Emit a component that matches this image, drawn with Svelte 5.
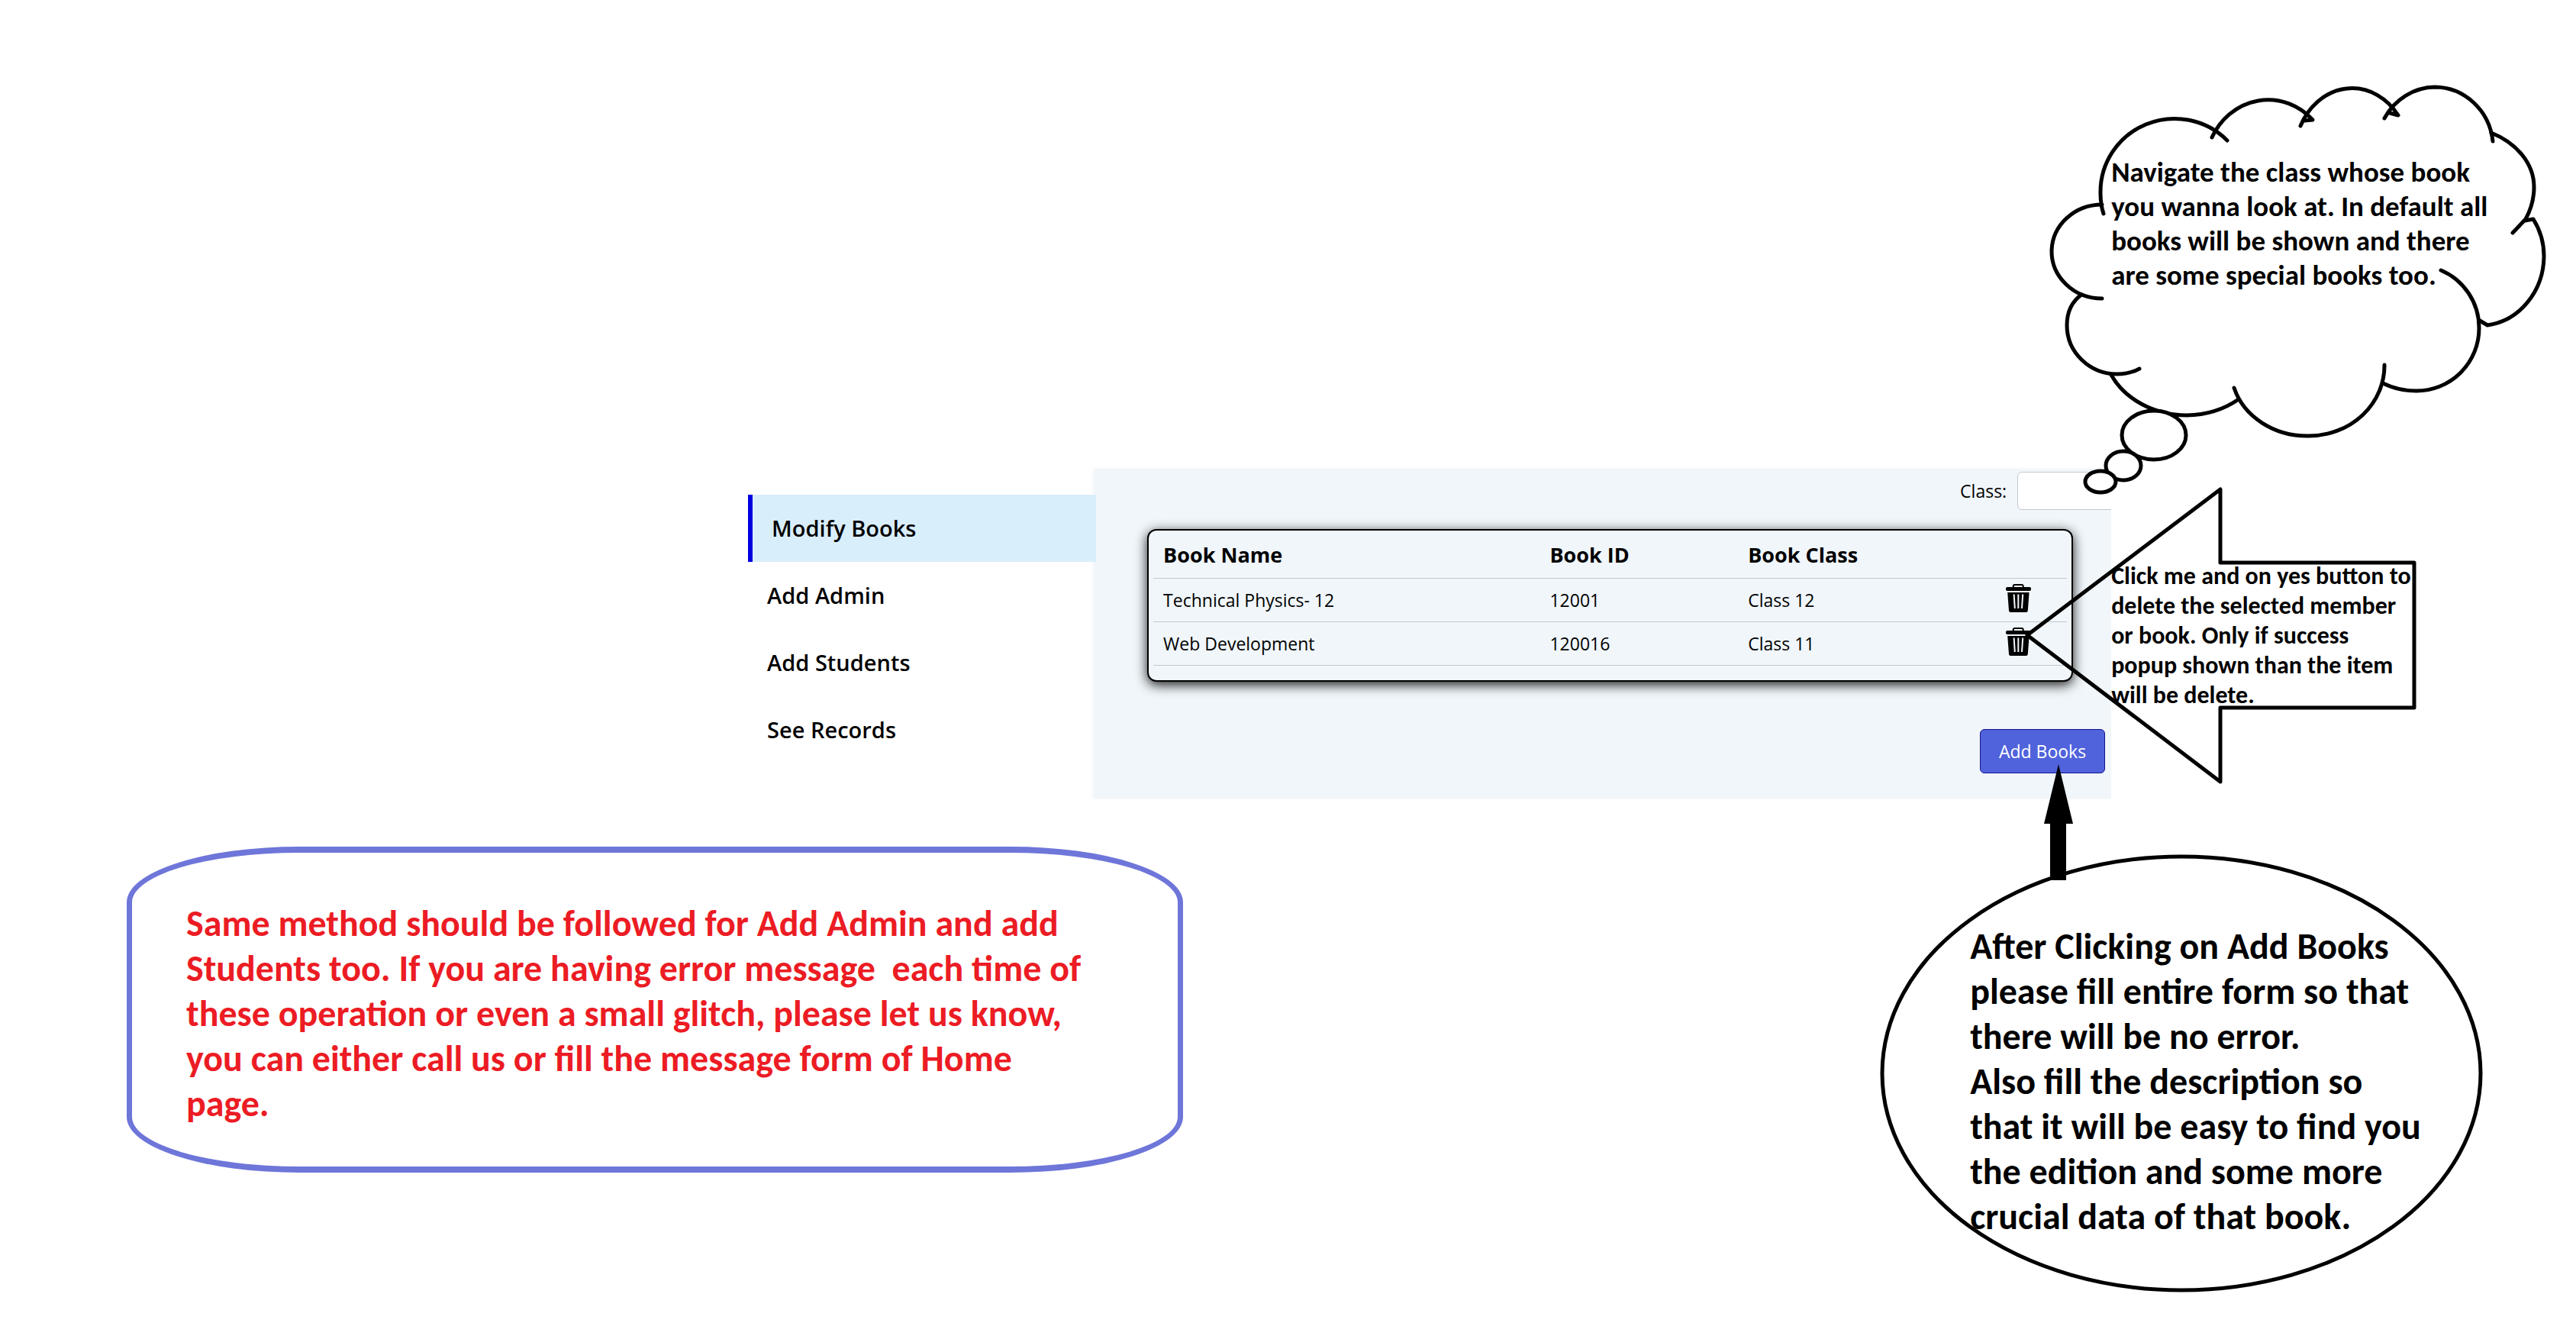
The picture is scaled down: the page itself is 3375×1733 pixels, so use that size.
<script>
  const menu = ['Modify Books', 'Add Admin', 'Add Students', 'See Records'];
  let active = $state('Modify Books');

  const books = [
    { name: 'Technical Physics- 12', id: '12001', grade: 'Class 12' },
    { name: 'Web Development', id: '120016', grade: 'Class 11' }
  ];

  const cloudLines = [
    'Navigate the class whose book',
    'you wanna look at. In default all',
    'books will be shown and there',
    'are some special books too.'
  ];
  const deleteLines = [
    'Click me and on yes button to',
    'delete the selected member',
    'or book. Only if success',
    'popup shown than the item',
    'will be delete.'
  ];
  const addLines = [
    'After Clicking on Add Books',
    'please fill entire form so that',
    'there will be no error.',
    'Also fill the description so',
    'that it will be easy to find you',
    'the edition and some more',
    'crucial data of that book.'
  ];
  const noteLines = [
    'Same method should be followed for Add Admin and add',
    'Students too. If you are having error message  each time of',
    'these operation or even a small glitch, please let us know,',
    'you can either call us or fill the message form of Home',
    'page.'
  ];
</script>

{#snippet lines(items)}
  {#each items as item}<span class="line">{item}</span>{/each}
{/snippet}

<main class="page">
  <div class="workspace">
    <nav class="menu" aria-label="Admin">
      {#each menu as item}
        <a href="#top" class="menu-item" class:active={active === item} onclick={() => (active = item)}>{item}</a>
      {/each}
    </nav>

    <section class="panel">
      <div class="filter">
        <label for="class-filter">Class:</label>
        <select id="class-filter" class="picker"><option value=""></option></select>
      </div>

      <div class="card">
        <table class="books">
          <colgroup>
            <col class="col-name" /><col class="col-id" /><col /><col class="col-action" />
          </colgroup>
          <thead>
            <tr><th>Book Name</th><th>Book ID</th><th>Book Class</th><th></th></tr>
          </thead>
          <tbody>
            {#each books as book}
              <tr>
                <td>{book.name}</td>
                <td>{book.id}</td>
                <td>{book.grade}</td>
                <td class="action">
                  <button class="trash" aria-label="Delete {book.name}">
                    <svg viewBox="0 0 33 37" width="33" height="37" aria-hidden="true">
                      <path d="M9.7 5V3Q9.7 1 11.7 1H20.7Q22.7 1 22.7 3V5" fill="none" stroke="#000" stroke-width="2" />
                      <rect x="0" y="4" width="33" height="5" rx="2" />
                      <path fill-rule="evenodd" d="M2.2 11H30.6L28.8 35Q28.6 37 26.6 37H6.2Q4.2 37 4 35ZM9.6 13.5L10.8 32H12.8L11.6 13.5ZM15.3 13.5V32H17.3V13.5ZM21.2 13.5L20 32H22L23.2 13.5Z" />
                    </svg>
                  </button>
                </td>
              </tr>
            {/each}
          </tbody>
        </table>
      </div>

      <div class="actions">
        <button class="add">Add Books</button>
      </div>
    </section>

    <!-- Callouts are anchored to the panel's top right corner -->
    <div class="callouts">
      <svg class="ink" viewBox="0 0 1000 1700" width="1000" height="1700" fill="none" stroke="#000" stroke-width="5" stroke-linejoin="round" aria-hidden="true">
        <g transform="translate(-2366 0)">
          <g stroke-linecap="round">
            <path d="M2918 184A97 96 0 0 0 2752 253Q2752 268 2756 280" />
            <path d="M2898 180A82 88 0 0 1 3030 157L3019 158" />
            <path d="M3014 165A75 87 0 0 1 3142 151L3131 148" />
            <path d="M3124 155A77 80 0 0 1 3190 114A77 80 0 0 1 3266 185" />
            <path d="M3264 174A104 80 0 0 1 3320 245Q3320 267 3309 287L3292 305" />
            <path d="M3308 289L3319 287A93 92 0 0 1 3333 336A85 92 0 0 1 3259 426L3249 420" />
            <path d="M3198 354A82 82 0 0 1 3248 430A82 82 0 0 1 3166 512Q3142 512 3122 502" />
            <path d="M3124 478A99 92 0 0 1 3025 571A100 88 0 0 1 2927 508" />
            <path d="M2933 523A110 92 0 0 1 2865 544A110 92 0 0 1 2766 491" />
            <path d="M2803 483Q2790 490 2774 490A66 64 0 0 1 2708 426Q2708 400 2727 386" />
            <path d="M2754 391A66 62 0 0 1 2688 328A66 62 0 0 1 2754 268" />
          </g>
          <g fill="#fff">
            <ellipse cx="2822" cy="570" rx="42" ry="32" />
            <ellipse cx="2782" cy="610" rx="23" ry="19" />
            <ellipse cx="2752" cy="631" rx="20" ry="14" />
          </g>
          <path d="M2656 832L2909 641V737H3163V927H2909V1024Z" />
          <ellipse cx="2858" cy="1406" rx="392" ry="284" />
          <path d="M2697 1001L2716 1079H2707V1153H2686V1079H2678Z" fill="#000" stroke="none" />
        </g>
      </svg>
      <p class="tip cloud">{@render lines(cloudLines)}</p>
      <p class="tip delete">{@render lines(deleteLines)}</p>
      <p class="tip adding">{@render lines(addLines)}</p>
    </div>
  </div>

  <aside class="note">{@render lines(noteLines)}</aside>
</main>

<style>
  :global(body) {
    margin: 0;
    background: #fff;
    overflow-x: hidden;
  }
  .page {
    box-sizing: border-box;
    min-height: 100vh;
    padding-top: 614px;
    color: #000;
    font: 23px/32px 'Open Sans', sans-serif;
  }
  .workspace {
    position: relative;
    display: flex;
    margin: 0 18.04% 0 29.04%;
  }
  .menu {
    z-index: 1;
    flex: 0 0 456px;
    display: flex;
    flex-direction: column;
    margin-right: -3px;
    padding-top: 34px;
  }
  .menu-item {
    padding: 28px 25px;
    color: #000;
    font-size: 29px;
    font-weight: 600;
    text-decoration: none;
  }
  .menu-item.active {
    border-left: 6px solid #0000e0;
    background: #d9eefb;
  }
  .panel {
    flex: 1;
    min-width: 0;
    overflow: hidden;
    background: #f0f6fa;
    box-shadow: -2px 0 6px rgba(0, 0, 0, 0.03);
  }
  .filter {
    display: flex;
    justify-content: flex-end;
    align-items: center;
    gap: 14px;
    margin-right: -30px;
    padding-top: 4px;
  }
  .picker {
    appearance: none;
    box-sizing: border-box;
    width: 153px;
    height: 50px;
    border: 1px solid #c4c8cc;
    border-radius: 6px;
    background: #fff;
    font: inherit;
  }
  .card {
    margin: 25px 50px 0 70px;
    padding: 6px 6px 19px;
    border: 2px solid #000;
    border-radius: 12px;
    box-shadow: 0 4px 16px rgba(0, 0, 0, 0.9);
    background: #f0f6fa;
  }
  .books {
    width: 100%;
    border-collapse: separate;
    border-spacing: 0;
    table-layout: fixed;
  }
  .col-name {
    width: 42.3%;
  }
  .col-id {
    width: 21.7%;
  }
  .col-action {
    width: 93px;
  }
  .books th,
  .books td {
    box-sizing: border-box;
    height: 57px;
    padding: 0 13px;
    border-bottom: 1px solid #c3c8ce;
    text-align: left;
    white-space: nowrap;
  }
  .books th {
    padding-bottom: 5px;
    font-size: 27px;
    font-weight: 700;
  }
  .books .action {
    padding-bottom: 5px;
  }
  .trash {
    display: block;
    padding: 0;
    border: 0;
    background: none;
  }
  .trash svg {
    display: block;
  }
  .actions {
    display: flex;
    justify-content: flex-end;
    padding: 62px 8px 33px;
  }
  .add {
    height: 58px;
    padding: 0 24px;
    border: 1px solid #14148c;
    border-radius: 6px;
    background: #5063dc;
    color: #fff;
    font: inherit;
  }
  .callouts {
    position: absolute;
    top: -614px;
    left: 100%;
    z-index: 2;
    pointer-events: none;
  }
  .ink {
    position: absolute;
    top: 0;
    left: -400px;
  }
  .line {
    display: block;
    white-space: pre;
  }
  .tip,
  .note {
    font-family: Carlito, Lato, sans-serif;
    font-weight: 700;
  }
  .tip {
    position: absolute;
    margin: 0;
  }
  .cloud {
    top: 203px;
    left: 0;
    font-size: 37px;
    line-height: 45px;
  }
  .delete {
    top: 735px;
    left: 0;
    font-size: 32px;
    line-height: 39px;
  }
  .adding {
    top: 1210px;
    left: -185px;
    font-size: 48px;
    line-height: 59px;
  }
  .note {
    box-sizing: border-box;
    width: 41%;
    margin: 63px 0 0 166px;
    padding: 63px 71px 53px;
    border: solid #6e76d9;
    border-width: 8px 7px;
    border-radius: 226px / 73px;
    color: #ec1c24;
    font-size: 48px;
    line-height: 59px;
  }
</style>
